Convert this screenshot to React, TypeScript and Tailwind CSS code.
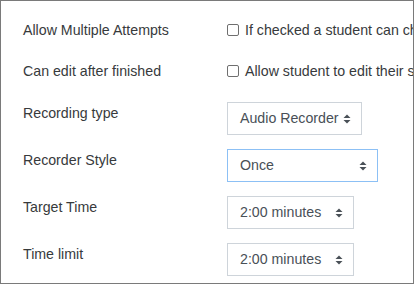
import React from 'react';

const font = { fontFamily: '"Liberation Sans", Arial, sans-serif' };

function Caret() {
  return (
    <svg width="8" height="10" viewBox="0 0 8 10" className="shrink-0">
      <path d="M4 0.5 L7.5 4 L0.5 4 Z" fill="#495057" />
      <path d="M4 9.5 L7.5 6 L0.5 6 Z" fill="#495057" />
    </svg>
  );
}

function Select({ value, width, focused }: { value: string; width: string; focused?: boolean }) {
  return (
    <div
      className={`flex h-[33px] items-center justify-between whitespace-nowrap border pl-3 pr-[10px] text-[14.2px] text-[#495057] ${width} ${
        focused ? 'border-[#8cc0f5]' : 'border-[#ced4da]'
      }`}
    >
      <span>{value}</span>
      <Caret />
    </div>
  );
}

function Check({ text }: { text: string }) {
  return (
    <div className="flex items-center whitespace-nowrap text-[14.2px] text-[#373a3c]">
      <span className="mr-[6px] h-[12px] w-[12px] shrink-0 rounded-[2px] border border-[#6f6f6f] bg-white" />
      {text}
    </div>
  );
}

const selects = [
  { label: 'Recording type', value: 'Audio Recorder', width: 'w-[135px]' },
  { label: 'Recorder Style', value: 'Once', width: 'w-[151px]', focused: true },
  { label: 'Target Time', value: '2:00 minutes', width: 'w-[127px]' },
  { label: 'Time limit', value: '2:00 minutes', width: 'w-[127px]' }
];

export default function App() {
  return (
    <div className="h-[285px] w-[415px] overflow-hidden bg-white" style={font}>
      <div className="h-[284px] w-[414px] overflow-hidden border border-[#7a7a7a] pl-[22px] pt-[18px]">
        <div className="flex flex-col">
          <div className="flex h-[22px] items-center leading-[22px]">
            <div className="w-[204px] shrink-0 text-[14.2px] text-[#373a3c]">Allow Multiple Attempts</div>
            <Check text="If checked a student can change their answer" />
          </div>
          <div className="mt-[19px] flex h-[22px] items-center leading-[22px]">
            <div className="w-[204px] shrink-0 text-[14.2px] text-[#373a3c]">Can edit after finished</div>
            <Check text="Allow student to edit their submission" />
          </div>
          {selects.map((s, i) => (
            <div key={s.label} className={`flex items-start ${i === 0 ? 'mt-[20px]' : 'mt-[14px]'}`}>
              <div className="w-[204px] shrink-0 text-[14.2px] leading-[22px] text-[#373a3c]">{s.label}</div>
              <Select value={s.value} width={s.width} focused={s.focused} />
            </div>
          ))}
        </div>
      </div>
    </div>
  );
}
